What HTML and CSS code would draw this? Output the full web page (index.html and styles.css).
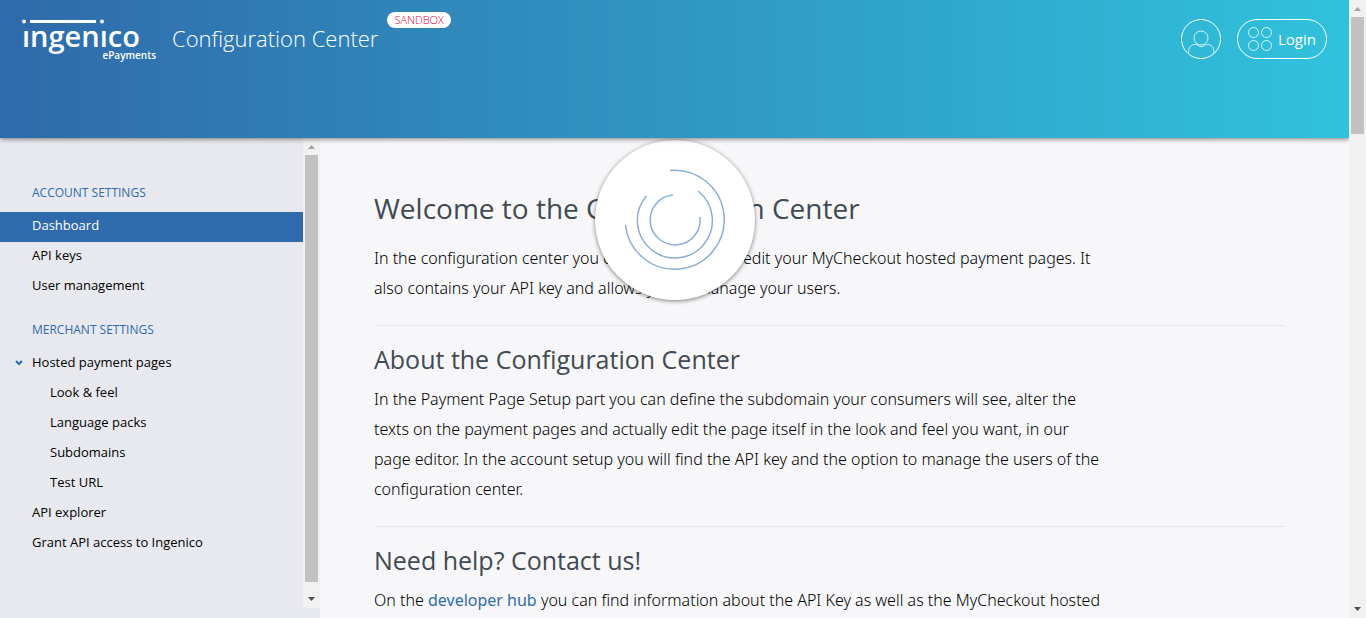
FILE: index.html
```html
<!DOCTYPE html>
<html lang="en">
<head>
<meta charset="utf-8">
<title>Configuration Center</title>
<link rel="stylesheet" href="styles.css">
</head>
<body>
<div class="page">
  <header class="header">
    <a class="logo" href="#" aria-label="ingenico ePayments">
      <svg class="logo-mark" viewBox="0 0 84 5" aria-hidden="true">
        <circle cx="2" cy="2.500" r="2"/><rect x="8" y="1" width="66" height="3"/><circle cx="80" cy="2.500" r="2"/>
      </svg>
      <span class="logo-name">ıngenıco</span>
      <span class="logo-sub">ePayments</span>
    </a>
    <span class="product">Configuration Center</span>
    <span class="badge">SANDBOX</span>
    <div class="actions">
      <button class="avatar" type="button" aria-label="Account">
        <svg viewBox="0 0 38 38" aria-hidden="true">
          <circle cx="19" cy="18" r="7"/>
          <path d="M6.500 34v-2c0-5 3-7.500 6.500-7.500 1.500 0 2 .3 3 1 2 1.500 4.500 1.500 6.500 0 1-.7 1.500-1 3-1 3.500 0 6.500 2.500 6.500 7.500v2"/>
        </svg>
      </button>
      <button class="login" type="button">
        <svg viewBox="0 0 26 26" aria-hidden="true">
          <circle cx="6.500" cy="6.500" r="5"/><circle cx="19.500" cy="6.500" r="5"/>
          <circle cx="6.500" cy="19.500" r="5"/><circle cx="19.500" cy="19.500" r="5"/>
        </svg>
        <span>Login</span>
      </button>
    </div>
  </header>
  <div class="body">
    <aside class="sidebar">
      <nav class="nav">
        <h2 class="nav-title">ACCOUNT SETTINGS</h2>
        <ul>
          <li><a class="active" href="#">Dashboard</a></li>
          <li><a href="#">API keys</a></li>
          <li><a href="#">User management</a></li>
        </ul>
        <h2 class="nav-title">MERCHANT SETTINGS</h2>
        <ul>
          <li><a class="parent" href="#"><svg class="chevron" viewBox="0 0 8 8" aria-hidden="true"><path d="M1 2l3 3 3-3"/></svg>Hosted payment pages</a>
            <ul class="sub">
              <li><a href="#">Look &amp; feel</a></li>
              <li><a href="#">Language packs</a></li>
              <li><a href="#">Subdomains</a></li>
              <li><a href="#">Test URL</a></li>
            </ul>
          </li>
          <li><a href="#">API explorer</a></li>
          <li><a href="#">Grant API access to Ingenico</a></li>
        </ul>
      </nav>
      <div class="scrollbar" aria-hidden="true">
        <svg viewBox="0 0 17 17"><path class="dim" d="M5 11h7L8.500 7z"/></svg>
        <div class="track"><div class="thumb thumb-nav"></div></div>
        <svg viewBox="0 0 17 17"><path d="M5 6h7L8.500 10z"/></svg>
      </div>
    </aside>
    <main class="main">
      <section>
        <h1>Welcome to the Configuration Center</h1>
        <p>In the configuration center you can customize and edit your MyCheckout hosted payment pages. It<br>also contains your API key and allows you to manage your users.</p>
      </section>
      <section>
        <h2>About the Configuration Center</h2>
        <p>In the Payment Page Setup part you can define the subdomain your consumers will see, alter the<br>texts on the payment pages and actually edit the page itself in the look and feel you want, in our<br>page editor. In the account setup you will find the API key and the option to manage the users of the<br>configuration center.</p>
      </section>
      <section>
        <h2>Need help? Contact us!</h2>
        <p>On the <a href="#">developer hub</a> you can find information about the API Key as well as the MyCheckout hosted</p>
      </section>
    </main>
    <div class="spinner" role="status" aria-label="Loading">
      <svg viewBox="0 0 100 100" aria-hidden="true">
        <path d="M45 .5A49.500 49.500 0 1 1 .5 55"/>
        <path d="M73 21A37.500 37.500 0 1 1 21.500 26"/>
        <path d="M75 47A25 25 0 1 1 48 25"/>
      </svg>
    </div>
  </div>
</div>
<div class="scrollbar" aria-hidden="true">
  <svg viewBox="0 0 17 17"><path class="dim" d="M5 11h7L8.500 7z"/></svg>
  <div class="track"><div class="thumb thumb-page"></div></div>
  <svg viewBox="0 0 17 17"><path d="M5 6h7L8.500 10z"/></svg>
</div>
</body>
</html>
```

FILE: styles.css
```css
* { box-sizing: border-box; }
body {
  margin: 0;
  height: 100vh;
  display: flex;
  overflow: hidden;
  background: #f7f7f9;
  color: #000;
  font-family: "Open Sans", "Noto Sans", sans-serif;
}
h1, h2, p, ul { margin: 0; padding: 0; }
ul { list-style: none; }
a { text-decoration: none; }
svg { fill: none; }
.page { flex: 1; min-width: 0; display: flex; flex-direction: column; overflow: hidden; }

.header {
  flex: none;
  height: 138px;
  position: relative;
  z-index: 1;
  display: flex;
  align-items: flex-start;
  padding: 0 22px;
  color: #fff;
  background: linear-gradient(90deg, #2f6aab, #30c2dc);
  box-shadow: 0 1px 5px rgba(0, 0, 0, .5);
}
.logo { display: flex; flex-direction: column; width: 134px; padding-top: 19px; color: #fff; }
.logo-mark { width: 84px; height: 5px; fill: #fff; }
.logo-name { font-size: 29px; line-height: 26px; font-weight: 600; margin-top: -1px; }
.logo-sub { font-size: 10px; line-height: 12px; font-weight: 600; align-self: flex-end; }
.product { margin: 22px 0 0 16px; font-size: 22px; line-height: 32px; font-weight: 300; }
.badge {
  margin: 12px 0 0 9px;
  padding: 0 7px;
  border-radius: 8px;
  background: #fff;
  color: #e4003a;
  font-size: 11px;
  line-height: 16px;
  font-weight: 300;
}
.actions { display: flex; gap: 16px; margin: 19px 0 0 auto; }
.avatar, .login {
  height: 40px;
  border: 1px solid #fff;
  border-radius: 20px;
  background: none;
  color: #fff;
  font: 400 15px/20px "Open Sans", sans-serif;
}
.avatar { width: 40px; padding: 0; overflow: hidden; }
.avatar svg { width: 38px; height: 38px; display: block; stroke: #fff; stroke-opacity: .8; }
.login { width: 90px; display: flex; align-items: center; gap: 5px; padding: 0 9px 1px; }
.login svg { width: 26px; height: 26px; flex: none; margin-top: 1px; stroke: #fff; stroke-opacity: .8; }

.body { flex: 1; min-height: 0; display: flex; position: relative; }
.sidebar { flex: none; width: 320px; display: flex; padding-bottom: 10px; background: #e8e9ee; }
.nav { flex: 1; padding-top: 44px; font-size: 13px; }
.nav-title { padding: 0 32px; margin-bottom: 8px; color: #2f6bac; font-size: 12px; line-height: 22px; font-weight: 400; }
.nav ul + .nav-title { margin-top: 17px; }
.nav a { display: block; padding-left: 32px; line-height: 26px; height: 30px; color: #000; }
.nav .active { background: #2f6bac; color: #fff; }
.nav .parent { display: flex; padding-left: 15px; }
.nav .sub a { padding-left: 50px; }
.chevron { width: 8px; height: 8px; margin: 10px 9px 0 0; stroke: #2f6bac; stroke-width: 2; }

.scrollbar { flex: none; width: 17px; display: flex; flex-direction: column; background: #f1f1f1; }
.scrollbar svg { width: 17px; height: 17px; flex: none; fill: #505050; }
.scrollbar .dim { fill: #a3a3a3; }
.track { flex: 1; padding: 0 2px; }
.thumb { background: #c1c1c1; }
.thumb-nav { height: 98%; }
.thumb-page { height: 20%; }

.main { flex: 1; min-width: 0; padding: 48px 64px 0 54px; overflow: hidden; }
.main section { padding-bottom: 22px; margin-bottom: 12px; border-bottom: 1px solid #e8e9ea; }
.main h1, .main h2 { color: #414a52; font-weight: 400; }
.main h1 { font-size: 28px; line-height: 44px; margin-bottom: 13px; }
.main h2 { font-size: 25px; line-height: 42px; margin-bottom: 4px; }
.main p { font-family: "Noto Sans", "Open Sans", sans-serif; font-size: 16px; line-height: 30px; font-weight: 300; }
.main p a { color: #2f6bac; font-weight: 400; }

.spinner {
  position: absolute;
  top: 2px;
  left: 50%;
  width: 160px;
  height: 160px;
  margin-left: -80px;
  padding: 30px;
  border-radius: 50%;
  background: #fff;
  box-shadow: 0 1px 4px rgba(0, 0, 0, .5);
}
.spinner svg { display: block; width: 100px; height: 100px; overflow: visible; stroke: #8aaed4; stroke-width: 1.500; }
```
